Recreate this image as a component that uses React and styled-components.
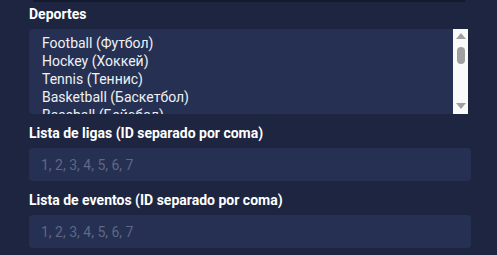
import React from 'react';
import styled, { createGlobalStyle } from 'styled-components';

const sports = [
  'Football (Футбол)',
  'Hockey (Хоккей)',
  'Tennis (Теннис)',
  'Basketball (Баскетбол)',
  'Baseball (Бейсбол)',
];

const App = () => {
  return (
    <>
      <GlobalStyle />
      <Page>
        <TopEdge />
        <Form>
          <Field>
            <Label>Deportes</Label>
            <ListBox>
              <Options>
                {sports.map((sport) => (
                  <Option key={sport}>{sport}</Option>
                ))}
              </Options>
              <ScrollBar>
                <Arrow $dir="up" />
                <Thumb />
                <Spacer />
                <Arrow $dir="down" />
              </ScrollBar>
            </ListBox>
          </Field>
          <Field>
            <Label>Lista de ligas (ID separado por coma)</Label>
            <Input type="text" placeholder="1, 2, 3, 4, 5, 6, 7" />
          </Field>
          <Field>
            <Label>Lista de eventos (ID separado por coma)</Label>
            <Input type="text" placeholder="1, 2, 3, 4, 5, 6, 7" />
          </Field>
        </Form>
      </Page>
    </>
  );
};

export default App;

const GlobalStyle = createGlobalStyle`
  html, body {
    margin: 0;
    background: #1e2540;
    font-family: Roboto, 'Liberation Sans', sans-serif;
  }
`;

const Page = styled.div`
  width: 497px;
  height: 255px;
  background: #1e2540;
  overflow: hidden;
`;

const TopEdge = styled.div`
  height: 2px;
  margin: 0 32px 0 33px;
  background: #151b2f;
`;

const Form = styled.div`
  display: flex;
  flex-direction: column;
  gap: 9px;
  width: 442px;
  padding: 2px 0 0 29px;
`;

const Field = styled.div`
  display: flex;
  flex-direction: column;
`;

const Label = styled.label`
  font-size: 14px;
  line-height: 20px;
  font-weight: 700;
  color: #ffffff;
  margin-bottom: 3px;

  &:first-child {
    margin-bottom: 5px;
  }
`;

const ListBox = styled.div`
  display: flex;
  width: 439px;
  height: 85px;
  background: #263052;
  border-radius: 4px 0 0 4px;
  overflow: hidden;
`;

const Options = styled.div`
  flex: 1;
  padding: 5px 13px 0;
  overflow: hidden;
`;

const Option = styled.div`
  font-size: 14px;
  line-height: 18px;
  color: #eef0f5;
  white-space: nowrap;
`;

const ScrollBar = styled.div`
  width: 15px;
  background: #fafafa;
  display: flex;
  flex-direction: column;
  align-items: center;
  padding: 4px 0 5px;
  box-sizing: border-box;
`;

const Arrow = styled.div`
  width: 0;
  height: 0;
  border-left: 5px solid transparent;
  border-right: 5px solid transparent;
  ${({ $dir }) =>
    $dir === 'up'
      ? 'border-bottom: 6px solid #a0a0a0; margin-bottom: 8px;'
      : 'border-top: 6px solid #a0a0a0;'}
`;

const Thumb = styled.div`
  width: 8px;
  height: 17px;
  border-radius: 4px;
  background: #a0a0a0;
`;

const Spacer = styled.div`
  flex: 1;
`;

const Input = styled.input`
  box-sizing: border-box;
  width: 442px;
  height: 33px;
  border: none;
  border-radius: 4px;
  background: #263052;
  padding: 0 12px;
  font-family: Roboto, 'Liberation Sans', sans-serif;
  font-size: 14px;
  color: #eef0f5;
  outline: none;

  &::placeholder {
    color: #5f6785;
  }
`;
